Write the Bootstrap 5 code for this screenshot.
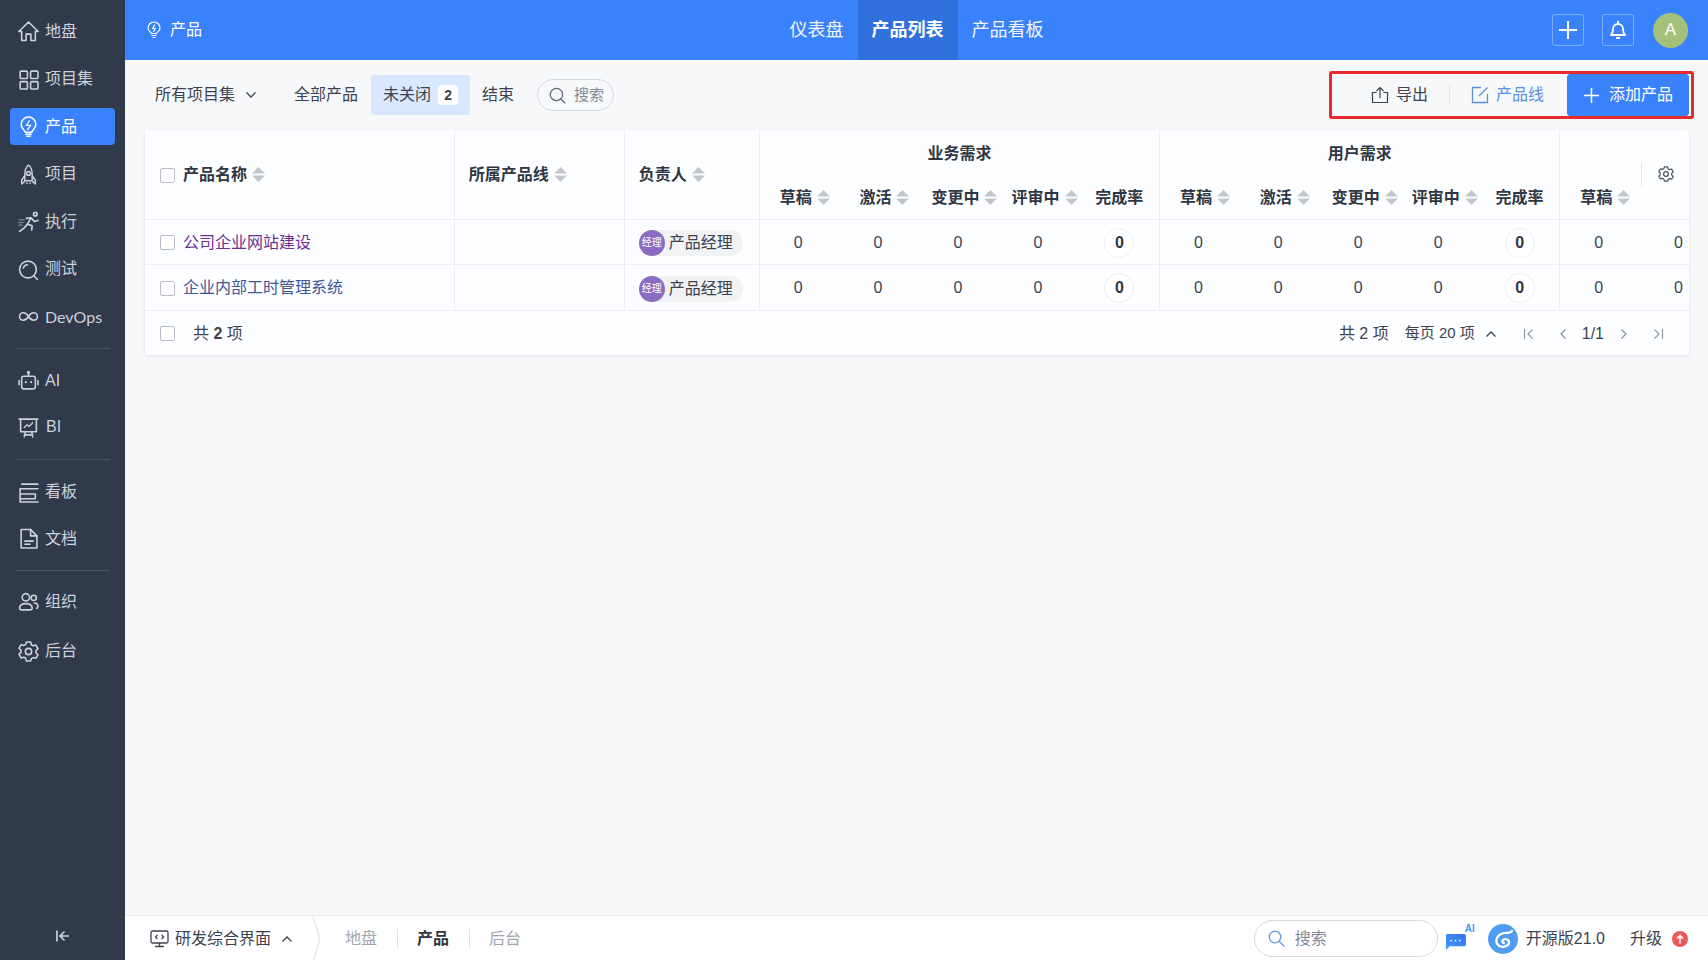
<!DOCTYPE html>
<html lang="zh-CN">
<head>
<meta charset="utf-8">
<title>产品列表</title>
<link href="https://cdn.jsdelivr.net/npm/bootstrap@5.3.0/dist/css/bootstrap.min.css" rel="stylesheet">
<style>
html,body{height:100%;}
body{font-family:"Liberation Sans","Noto Sans CJK SC",sans-serif;font-size:16px;color:#3c4350;background:#f7f8fa;overflow:hidden;}
svg{display:block;flex:none;}
.shell{height:960px;width:1708px;}
.side{width:125px;background:#303a4b;color:#ccd3dd;padding-top:13px;flex:none;}
.side-item{height:37px;margin:0 10px 10.5px;padding-left:8px;gap:6px;border-radius:4px;font-size:16px;line-height:1;color:#ccd3dd;}
.side-item svg{width:21px;height:21px;}
.side-item.on{background:#3a82fc;color:#fff;}
.side-item.pitch-s{margin-bottom:9.5px;}
.side-item.pitch-l{margin-bottom:12.5px;}
.side-sep{height:1px;background:#4b5566;margin:3px 15px 3px;}
.side-sep.sep-a{margin-top:2px;}
.side-sep.sep-c{margin-bottom:2px;}
.side-sep + .side-item{margin-top:10.5px;}
.bi-label{margin-left:1px;}
.side-foot{height:45px;color:#c8d0da;padding-bottom:3px;}
.topbar{height:60px;background:#3a82fc;color:#fff;flex:none;}
.top-side{flex:1 1 0;min-width:0;}
.top-crumb{gap:8px;}
.top-crumb svg{margin-left:21px;}
.top-link{padding:0 14px;font-size:18px;height:60px;line-height:60px;color:#f2f6ff;}
.top-link.on{background:#2f70dc;font-weight:700;color:#fff;}
.top-acts{gap:18px;}
.top-btn{width:32px;height:32px;border:1px solid rgba(255,255,255,.35);border-radius:3px;}
.top-avatar{width:35px;height:35px;border-radius:50%;background:#a4c07a;color:#fff;font-size:17px;margin:0 20px 0 1px;}
.tools{height:70px;padding:0 19px 0 30px;flex:none;}
.tool-pick{gap:10px;margin-right:37px;}
.tool-tab{height:40px;padding:0 12px;border-radius:3px;gap:7px;}
.tool-tab.on{background:#d8e8fe;}
.tab-gap{margin-left:13px;}
.tool-count{background:#fff;border-radius:4px;width:20px;height:20px;font-size:14px;font-weight:700;}
.tool-search{height:32px;width:77px;border:1px solid #d4d8e1;border-radius:16px;margin-left:11px;padding-left:11px;gap:8px;color:#838a97;font-size:15px;}
.mark-box{border:3px solid #e62a2d;border-radius:3px;height:48px;width:365px;padding:1px 2px 1px 0;margin-right:-5px;}
.act{gap:7px;line-height:1;}
.act-blue{color:#5a8fe6;}
.act-line{width:1px;height:20px;background:#e3e5ea;margin:0 21px;}
.add-btn{--bs-btn-bg:#3a82fc;--bs-btn-border-color:#3a82fc;--bs-btn-color:#fff;--bs-btn-hover-bg:#3a82fc;--bs-btn-hover-border-color:#3a82fc;--bs-btn-hover-color:#fff;width:122px;height:42px;margin-left:23px;padding:0 0 0 16px;gap:10px;border-radius:3px;font-size:16px;}
.sheet{background:#fdfeff;border-radius:3px;box-shadow:0 1px 3px rgba(40,50,70,.12);overflow:hidden;width:1544px;}
.grid-table{table-layout:fixed;width:1575px;margin:0;--bs-table-bg:transparent;--bs-table-color:#3c4350;border-color:#eceef1;}
.grid-table th,.grid-table td{padding:2px 0 0;vertical-align:middle;border-bottom:1px solid #eceef1;font-size:16px;}
.grid-table th{font-weight:700;color:#2f3643;}
.cell-l{padding-left:14px !important;border-right:1px solid #eceef1;}
.cell-f{padding-left:15px !important;}
.cell-b{border-right:1px solid #eceef1;}
.row-g{height:45px;}
.row-g th{border-bottom:0;}
.row-s{height:44px;}
.row-d{height:45.5px;}
.cell-s{padding-left:10px !important;text-align:center;}
.cell-n{text-align:center;padding-right:3px !important;}
.chk{width:15px;height:15px;border:1px solid #b9bdc6;border-radius:2px;background:#fff;flex:none;}
.name-wrap{gap:8px;}
.sort-mark{display:inline-block;vertical-align:-2px;margin-left:5px;}
.who{height:26px;padding-right:10px;border-radius:13px;background:#f1f2f4;gap:4px;color:#3c4350;}
.who-pic{width:26px;height:26px;border-radius:50%;background:#8a6cc0;color:#fff;font-size:10px;line-height:1;}
.rate{width:30px;height:30px;border-radius:50%;border:1px solid #eceef1;background:#fff;font-weight:700;color:#2f3643;}
.link-a{color:#6b2e91;text-decoration:none;}
.link-b{color:#3e5596;text-decoration:none;}
.grid-foot{height:44px;padding:2px 25px 0 15px;}
.count-l{margin-left:18px;}
.pager-size{font-size:15px;margin-left:16px;}
.gear-over{position:absolute;top:32px;right:0;width:48px;height:24px;border-left:1px solid #e6e8ec;}
.sheet-wrap{position:relative;width:1544px;margin-left:20px;}
.bottom{height:45px;background:#fff;border-top:1px solid #e8eaee;flex:none;padding:1px 0 0 24px;}
.bottom-view{gap:6px;color:#3c4350;padding-left:1px;}
.bottom-app{color:#a0a6b0;}
.bottom-app.on{color:#2f3643;font-weight:700;}
.bottom-line{width:1px;height:20px;background:#e1e3e8;margin:0 19px 0 20px;}
.bottom-search{width:184px;height:37px;border:1px solid #d4d8e1;border-radius:19px;padding-left:13px;gap:10px;color:#838a97;}
.ai-wrap{width:31px;height:24px;margin-left:6px;}
.ai-mark{position:absolute;right:0;top:-3px;font-size:10px;font-weight:700;color:#4a96f3;line-height:1;}
.logo-gap{margin-left:13px;}
</style>
</head>
<body>
<div class="shell d-flex">
  <aside class="side d-flex flex-column">
    <div class="side-item d-flex align-items-center"><svg viewBox="0 0 20 20" fill="none" stroke="currentColor" stroke-width="1.500" stroke-linejoin="round"><path d="M.8 10 10 1l9.200 9h-2.700v8.500h-4.200V12.500H7.700v6H3.500V10z"/></svg>地盘</div>
    <div class="side-item d-flex align-items-center"><svg viewBox="0 0 20 20" fill="none" stroke="currentColor" stroke-width="1.500"><rect x="2" y="2" width="7" height="7" rx="1"/><rect x="12" y="2" width="7" height="7" rx="1"/><rect x="2" y="12" width="7" height="7" rx="1"/><rect x="12" y="12" width="7" height="7" rx="1"/></svg>项目集</div>
    <div class="side-item on d-flex align-items-center"><svg viewBox="0 0 20 20" fill="none" stroke="currentColor" stroke-width="1.500" stroke-linecap="round"><path d="M7 15.500C6.500 13.500 3 12 3 8a7 7 0 0 1 14 0c0 4-3.500 5.500-4 7.500z"/><path d="M7.500 17.500h5M8.500 19.500h3"/><path d="M10.800 4.500 8 9h4l-2.800 4" stroke-width="1.200"/></svg>产品</div>
    <div class="side-item d-flex align-items-center"><svg viewBox="0 0 20 20" fill="none" stroke="currentColor" stroke-width="1.400" stroke-linejoin="round"><path d="M10 1c3 2.500 3.500 6 3.500 9v6h-7v-6C6.500 7 7 3.500 10 1z"/><circle cx="10" cy="9" r="1.800"/><path d="M6.500 11 3.500 15.500V19l3-2.500M13.500 11l3 4.500V19l-3-2.500M8.500 17.500v1.500M11.500 17.500v1.500"/></svg>项目</div>
    <div class="side-item d-flex align-items-center"><svg viewBox="0 0 20 20" fill="none" stroke="currentColor" stroke-width="1.600" stroke-linecap="round" stroke-linejoin="round"><circle cx="16.500" cy="3" r="1.700"/><path d="M1.500 19.500 6 16l3-3.500 4.500 1.500-.5 4M9 12.500 12.500 6.500 8 7M12.500 6.500l3 3.500 3.500-1"/><path d="M1 8.500h5M0 11h5M1 13.500h3" stroke="#7f8896" stroke-width="1.200"/></svg>执行</div>
    <div class="side-item d-flex align-items-center"><svg viewBox="0 0 20 20" fill="none" stroke="currentColor" stroke-width="1.500" stroke-linecap="round"><circle cx="9.500" cy="10" r="8"/><path d="m15 16 3.500 3.500M9 5.500a4.500 4.500 0 0 0-4 3"/></svg>测试</div>
    <div class="side-item d-flex align-items-center"><svg viewBox="0 0 20 20" fill="none" stroke="currentColor" stroke-width="1.500"><path d="M10 10C8.500 7.500 7 6.500 5 6.500a3.500 3.500 0 0 0 0 7c2 0 3.500-1 5-3.500s3-3.500 5-3.500a3.500 3.500 0 0 1 0 7c-2 0-3.500-1-5-3.500z"/></svg><span style="font-family:Lato,sans-serif">DevOps</span></div>
    <div class="side-sep sep-a"></div>
    <div class="side-item pitch-s d-flex align-items-center"><svg viewBox="0 0 20 20" fill="none" stroke="currentColor" stroke-width="1.500" stroke-linecap="round"><rect x="3.500" y="6" width="13" height="12" rx="2"/><path d="M10 6V3"/><circle cx="10" cy="2.200" r=".8"/><path d="M1 10v4M19 10v4"/><path d="M7.500 11.500v.2M12.500 11.500v.2" stroke-width="2"/></svg>AI</div>
    <div class="side-item d-flex align-items-center"><svg viewBox="0 0 20 20" fill="none" stroke="currentColor" stroke-width="1.500" stroke-linecap="round" stroke-linejoin="round"><path d="M1 2h18M2.500 2v12h15V2M7 14l-1 5M13 14l1 5M6 17h8"/><path d="m6 10 2.500-2.500 2 1.500L14 5.500" stroke-width="1.200"/></svg><span class="bi-label">BI</span></div>
    <div class="side-sep"></div>
    <div class="side-item pitch-s d-flex align-items-center"><svg viewBox="0 0 20 20" fill="none" stroke="currentColor" stroke-width="1.500" stroke-linecap="round" stroke-linejoin="round"><path d="M3.500 2H19M2 6.500h17M2 6.500V19M2 11.500h14.500v4.500H2M2 19h17"/></svg>看板</div>
    <div class="side-item pitch-s d-flex align-items-center"><svg viewBox="0 0 20 20" fill="none" stroke="currentColor" stroke-width="1.500" stroke-linejoin="round" stroke-linecap="round"><path d="M3 1.500h9l6 6v11.500H3z"/><path d="M12 1.500v6h6M6.500 12.500h8M6.500 15.500h5"/></svg>文档</div>
    <div class="side-sep sep-c"></div>
    <div class="side-item pitch-l d-flex align-items-center"><svg viewBox="0 0 20 20" fill="none" stroke="currentColor" stroke-width="1.500" stroke-linecap="round"><circle cx="7.500" cy="6" r="3.500"/><path d="M1.500 16.500c0-3 2.500-4.500 6-4.500s6 1.500 6 4.500c0 1-1 1.500-2 1.500h-8c-1 0-2-.5-2-1.500z"/><circle cx="15" cy="6.500" r="2.500"/><path d="M15.500 11.500c2 0 3.500 1.500 3.500 3.500 0 1-.5 1.500-1.500 1.500"/></svg>组织</div>
    <div class="side-item d-flex align-items-center"><svg viewBox="0 0 20 20" fill="none" stroke="currentColor" stroke-width="1.500" stroke-linejoin="round"><path d="M8 1h4l.7 2.600 1.700 1 2.600-.7 2 3.400-1.900 1.900v2l1.900 1.900-2 3.400-2.600-.7-1.700 1L12 19H8l-.7-2.600-1.700-1-2.600.7-2-3.400L2.900 10.800v-2L1 6.900l2-3.400 2.600.7 1.700-1z"/><circle cx="10" cy="10" r="3"/></svg>后台</div>
    <div class="side-foot d-flex align-items-center justify-content-center mt-auto"><svg width="14" height="14" viewBox="0 0 14 14" fill="none" stroke="currentColor" stroke-width="1.700"><path d="M1 1.500v11M13 7H4.500M8.500 2.500 4 7l4.500 4.500"/></svg></div>
  </aside>

  <div class="flex-grow-1 d-flex flex-column">
    <header class="topbar d-flex align-items-center">
      <div class="top-side top-crumb d-flex align-items-center"><svg width="16" height="18" viewBox="0 0 16 18" fill="none" stroke="currentColor" stroke-width="1.200" stroke-linecap="round"><path d="M5.500 12.500C5 11 2 10 2 7a6 6 0 0 1 12 0c0 3-3 4-3.500 5.500z"/><path d="M6 14.500h4M7 16.500h2M8.500 4 6.800 7.500h2.400L7.500 10.500"/></svg><span>产品</span></div>
      <nav class="d-flex">
        <a class="top-link text-decoration-none" href="#">仪表盘</a>
        <a class="top-link on text-decoration-none" href="#">产品列表</a>
        <a class="top-link text-decoration-none" href="#">产品看板</a>
      </nav>
      <div class="top-side top-acts d-flex align-items-center justify-content-end">
        <span class="top-btn d-flex align-items-center justify-content-center"><svg width="18" height="18" viewBox="0 0 18 18" stroke="#fff" stroke-width="2"><path d="M9 0v18M0 9h18"/></svg></span>
        <span class="top-btn d-flex align-items-center justify-content-center"><svg width="16" height="20" viewBox="0 0 16 20" fill="none" stroke="#fff" stroke-width="1.800" stroke-linejoin="round"><path d="M1 15c1.500-1.500 2-2.500 2-6a5 5 0 0 1 10 0c0 3.500.5 4.500 2 6z"/><path d="M8 .8v2.500M6 18h4"/></svg></span>
        <span class="top-avatar d-flex align-items-center justify-content-center">A</span>
      </div>
    </header>

    <div class="tools d-flex align-items-center">
      <span class="tool-pick d-flex align-items-center">所有项目集<svg width="12" height="8" viewBox="0 0 12 8" fill="none" stroke="#3c4350" stroke-width="1.300"><path d="m1.500 1.500 4.500 4.500 4.500-4.500"/></svg></span>
      <span>全部产品</span>
      <span class="tool-tab tab-gap on d-flex align-items-center"><span>未关闭</span><span class="tool-count d-flex align-items-center justify-content-center">2</span></span>
      <span class="tool-tab d-flex align-items-center">结束</span>
      <span class="tool-search d-flex align-items-center"><svg width="17" height="17" viewBox="0 0 16 16" fill="none" stroke="#5f6775" stroke-width="1.200" stroke-linecap="round"><circle cx="7" cy="7" r="5.800"/><path d="m11.500 11.500 3.500 3.500"/></svg><span>搜索</span></span>
      <div class="mark-box ms-auto d-flex align-items-center justify-content-end">
        <span class="act d-flex align-items-center"><svg width="18" height="18" viewBox="0 0 18 18" fill="none" stroke="#3c4350" stroke-width="1.200"><path d="M5.500 6.500H1.500v10h15v-10h-4M9 12V1.500M5.500 5 9 1.500 12.500 5"/></svg>导出</span>
        <span class="act-line"></span>
        <span class="act act-blue d-flex align-items-center"><svg width="18" height="18" viewBox="0 0 18 18" fill="none" stroke="currentColor" stroke-width="1.300"><path d="M10 1.500H1.500v15h15V8M8 10l8.500-8.500"/></svg>产品线</span>
        <button type="button" class="btn add-btn d-flex align-items-center"><svg width="15" height="15" viewBox="0 0 15 15" stroke="#fff" stroke-width="1.500"><path d="M7.500 0v15M0 7.500h15"/></svg>添加产品</button>
      </div>
    </div>

    <div class="sheet-wrap">
      <div class="sheet">
        <table class="table grid-table">
          <colgroup><col style="width:309px"><col style="width:170px"><col style="width:135px"><col span="12" style="width:80px"></colgroup>
          <thead>
            <tr class="row-g">
              <th rowspan="2" class="cell-l cell-f" style="border-bottom:1px solid #eceef1"><span class="name-wrap d-flex align-items-center"><span class="chk"></span><span>产品名称<svg class="sort-mark d-inline-block" width="13" height="15" viewBox="0 0 12 14" fill="#c3c5cc"><path d="M6 0l6 6H0zM6 14l6-6H0z"/></svg></span></span></th>
              <th rowspan="2" class="cell-l" style="border-bottom:1px solid #eceef1">所属产品线<svg class="sort-mark d-inline-block" width="13" height="15" viewBox="0 0 12 14" fill="#c3c5cc"><path d="M6 0l6 6H0zM6 14l6-6H0z"/></svg></th>
              <th rowspan="2" class="cell-l" style="border-bottom:1px solid #eceef1">负责人<svg class="sort-mark d-inline-block" width="13" height="15" viewBox="0 0 12 14" fill="#c3c5cc"><path d="M6 0l6 6H0zM6 14l6-6H0z"/></svg></th>
              <th colspan="5" class="text-center cell-b">业务需求</th>
              <th colspan="5" class="text-center cell-b">用户需求</th>
              <th colspan="2"></th>
            </tr>
            <tr class="row-s">
              <th class="cell-s">草稿<svg class="sort-mark d-inline-block" width="13" height="15" viewBox="0 0 12 14" fill="#c3c5cc"><path d="M6 0l6 6H0zM6 14l6-6H0z"/></svg></th>
              <th class="cell-s">激活<svg class="sort-mark d-inline-block" width="13" height="15" viewBox="0 0 12 14" fill="#c3c5cc"><path d="M6 0l6 6H0zM6 14l6-6H0z"/></svg></th>
              <th class="cell-s">变更中<svg class="sort-mark d-inline-block" width="13" height="15" viewBox="0 0 12 14" fill="#c3c5cc"><path d="M6 0l6 6H0zM6 14l6-6H0z"/></svg></th>
              <th class="cell-s">评审中<svg class="sort-mark d-inline-block" width="13" height="15" viewBox="0 0 12 14" fill="#c3c5cc"><path d="M6 0l6 6H0zM6 14l6-6H0z"/></svg></th>
              <th class="text-center cell-b">完成率</th>
              <th class="cell-s">草稿<svg class="sort-mark d-inline-block" width="13" height="15" viewBox="0 0 12 14" fill="#c3c5cc"><path d="M6 0l6 6H0zM6 14l6-6H0z"/></svg></th>
              <th class="cell-s">激活<svg class="sort-mark d-inline-block" width="13" height="15" viewBox="0 0 12 14" fill="#c3c5cc"><path d="M6 0l6 6H0zM6 14l6-6H0z"/></svg></th>
              <th class="cell-s">变更中<svg class="sort-mark d-inline-block" width="13" height="15" viewBox="0 0 12 14" fill="#c3c5cc"><path d="M6 0l6 6H0zM6 14l6-6H0z"/></svg></th>
              <th class="cell-s">评审中<svg class="sort-mark d-inline-block" width="13" height="15" viewBox="0 0 12 14" fill="#c3c5cc"><path d="M6 0l6 6H0zM6 14l6-6H0z"/></svg></th>
              <th class="text-center cell-b">完成率</th>
              <th class="cell-s">草稿<svg class="sort-mark d-inline-block" width="13" height="15" viewBox="0 0 12 14" fill="#c3c5cc"><path d="M6 0l6 6H0zM6 14l6-6H0z"/></svg></th>
              <th></th>
            </tr>
          </thead>
          <tbody>
            <tr class="row-d">
              <td class="cell-l cell-f"><span class="name-wrap d-flex align-items-center"><span class="chk"></span><a class="link-a" href="#">公司企业网站建设</a></span></td>
              <td class="cell-l"></td>
              <td class="cell-l"><span class="who d-inline-flex align-items-center"><span class="who-pic d-flex align-items-center justify-content-center">经理</span>产品经理</span></td>
              <td class="cell-n">0</td><td class="cell-n">0</td><td class="cell-n">0</td><td class="cell-n">0</td>
              <td class="cell-b"><span class="rate d-flex align-items-center justify-content-center mx-auto">0</span></td>
              <td class="cell-n">0</td><td class="cell-n">0</td><td class="cell-n">0</td><td class="cell-n">0</td>
              <td class="cell-b"><span class="rate d-flex align-items-center justify-content-center mx-auto">0</span></td>
              <td class="cell-n">0</td><td class="cell-n">0</td>
            </tr>
            <tr class="row-d">
              <td class="cell-l cell-f"><span class="name-wrap d-flex align-items-center"><span class="chk"></span><a class="link-b" href="#">企业内部工时管理系统</a></span></td>
              <td class="cell-l"></td>
              <td class="cell-l"><span class="who d-inline-flex align-items-center"><span class="who-pic d-flex align-items-center justify-content-center">经理</span>产品经理</span></td>
              <td class="cell-n">0</td><td class="cell-n">0</td><td class="cell-n">0</td><td class="cell-n">0</td>
              <td class="cell-b"><span class="rate d-flex align-items-center justify-content-center mx-auto">0</span></td>
              <td class="cell-n">0</td><td class="cell-n">0</td><td class="cell-n">0</td><td class="cell-n">0</td>
              <td class="cell-b"><span class="rate d-flex align-items-center justify-content-center mx-auto">0</span></td>
              <td class="cell-n">0</td><td class="cell-n">0</td>
            </tr>
          </tbody>
        </table>
        <div class="grid-foot d-flex align-items-center">
          <span class="chk"></span><span class="count-l">共 <b>2</b> 项</span>
          <div class="ms-auto d-flex align-items-center">
            <span>共 2 项</span>
            <span class="pager-size">每页 20 项</span>
            <svg style="margin-left:10px" width="12" height="8" viewBox="0 0 12 8" fill="none" stroke="#3c4350" stroke-width="1.300"><path d="m1.500 6.500 4.500-4.500 4.500 4.500"/></svg>
            <svg style="margin-left:26px" width="12" height="12" viewBox="0 0 12 12" fill="none" stroke="#9097a3" stroke-width="1.200"><path d="M1.500 1v10M9.500 1.500 5 6l4.500 4.500"/></svg>
            <svg style="margin-left:24px" width="8" height="12" viewBox="0 0 8 12" fill="none" stroke="#8a919e" stroke-width="1.200"><path d="M6.500 1.500 2 6l4.500 4.500"/></svg>
            <span style="margin-left:15px">1/1</span>
            <svg style="margin-left:16px" width="8" height="12" viewBox="0 0 8 12" fill="none" stroke="#8a919e" stroke-width="1.200"><path d="M1.500 1.500 6 6l-4.500 4.500"/></svg>
            <svg style="margin-left:24px" width="12" height="12" viewBox="0 0 12 12" fill="none" stroke="#9097a3" stroke-width="1.200"><path d="M10.500 1v10M2.500 1.500 7 6l-4.500 4.500"/></svg>
          </div>
        </div>
      </div>
      <div class="gear-over d-flex align-items-center justify-content-center"><svg width="16" height="16" viewBox="0 0 20 20" fill="none" stroke="#4a5260" stroke-width="1.500" stroke-linejoin="round"><path d="M8 1h4l.7 2.600 1.700 1 2.600-.7 2 3.400-1.900 1.900v2l1.900 1.900-2 3.400-2.600-.7-1.700 1L12 19H8l-.7-2.600-1.700-1-2.600.7-2-3.400L2.900 10.800v-2L1 6.900l2-3.400 2.600.7 1.700-1z"/><circle cx="10" cy="10" r="3"/></svg></div>
    </div>

    <footer class="bottom d-flex align-items-center mt-auto">
      <span class="bottom-view d-flex align-items-center"><svg width="19" height="18" viewBox="0 0 19 18" fill="none" stroke="#3c4350" stroke-width="1.300"><rect x="1" y="1" width="17" height="12" rx="1.500"/><path d="M9.500 13v3.500M5 16.500h9M7.500 5 5.500 7l2 2M11.500 5l2 2-2 2"/></svg>研发综合界面<svg class="ms-1" width="12" height="8" viewBox="0 0 12 8" fill="none" stroke="#3c4350" stroke-width="1.300"><path d="m1.500 6.500 4.500-4.500 4.500 4.500"/></svg></span>
      <svg style="margin:0 24px 0 19px" width="9" height="44" viewBox="0 0 9 44" fill="none" stroke="#dfe1e6" stroke-width="1.200"><path d="M1 0 8 22 1 44"/></svg>
      <span class="bottom-app">地盘</span><span class="bottom-line"></span>
      <span class="bottom-app on">产品</span><span class="bottom-line"></span>
      <span class="bottom-app">后台</span>
      <div class="ms-auto d-flex align-items-center">
        <span class="bottom-search d-flex align-items-center"><svg width="17" height="17" viewBox="0 0 17 17" fill="none" stroke="#5f93e0" stroke-width="1.300" stroke-linecap="round"><circle cx="7" cy="7" r="5.800"/><path d="m11.500 11.500 4.500 4.500"/></svg><span>搜索</span></span>
        <span class="ai-wrap position-relative"><svg width="23" height="19" viewBox="0 0 24 20" style="margin-top:5px"><defs><linearGradient id="aiGrad" x1="0" y1="1" x2="1" y2="0"><stop offset="0" stop-color="#3aa2f5"/><stop offset="1" stop-color="#3a6ff0"/></linearGradient></defs><path d="M3 2h18a2 2 0 0 1 2 2v9a2 2 0 0 1-2 2H6l-4 4V4a2 2 0 0 1 1-2z" fill="url(#aiGrad)"/><path d="M7.500 9h.1M12 9h.1M16.500 9h.1" stroke="#fff" stroke-width="1.800" stroke-linecap="round"/></svg><span class="ai-mark">AI</span></span>
        <svg class="logo-gap" width="30" height="30" viewBox="0 0 30 30" fill="none"><circle cx="15" cy="15" r="15" fill="#4f9cf0"/><path d="M24 7c-2 3-7 1-11 3-5 2.500-6 8-3 11 3 3 10 2 11-2 .8-3.500-4-5-6-3-1.500 1.500-.5 3 1 3" stroke="#fff" stroke-width="2.200" stroke-linecap="round"/></svg>
        <span class="ms-2">开源版21.0</span>
        <span style="margin-left:25px">升级</span>
        <svg style="margin:0 20px 0 10px" width="16" height="16" viewBox="0 0 16 16"><circle cx="8" cy="8" r="8" fill="#ed5a55"/><path d="M8 12.500V4.500M5 7.500l3-3 3 3" fill="none" stroke="#fff" stroke-width="1.600"/></svg>
      </div>
    </footer>
  </div>
</div>
<script src="https://cdn.jsdelivr.net/npm/bootstrap@5.3.0/dist/js/bootstrap.bundle.min.js"></script>
</body>
</html>
